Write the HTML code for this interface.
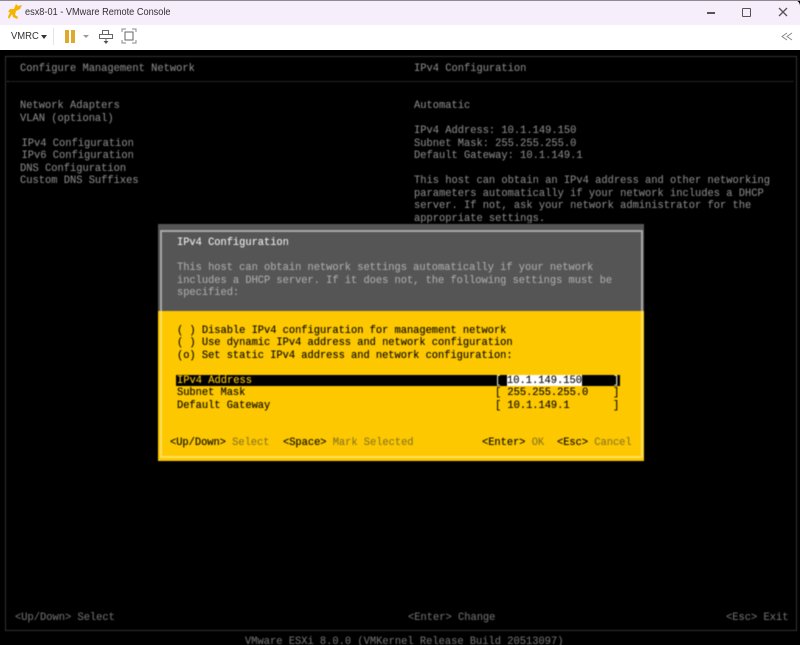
<!DOCTYPE html>
<html><head><meta charset="utf-8">
<style>
html,body{margin:0;padding:0;background:#000}
#p{position:relative;width:800px;height:645px;overflow:hidden;background:#000;font-family:"Liberation Sans",sans-serif}
#tb{position:absolute;left:0;top:0;width:800px;height:25px;background:#f6eefa;border-top-right-radius:6px}
#tl{position:absolute;left:25px;top:5px;font-size:10.5px;line-height:15px;color:#333;white-space:nowrap;transform:scaleX(.875);transform-origin:0 0}
#bar{position:absolute;left:0;top:25px;width:800px;height:25px;background:#fff}
.a{position:absolute}
#scr{position:absolute;left:0;top:50px;width:800px;height:595px;filter:blur(.4px)}
.t{position:absolute;font-family:"Liberation Mono",monospace;font-size:10.42px;line-height:12px;white-space:pre;color:#868686;font-weight:400;transform:scaleY(1.1);-webkit-text-stroke:.1px currentColor}
.k{color:#000;letter-spacing:-.03px}.d{color:#8a7420}.q{letter-spacing:-.03px}
</style></head><body><div id="p">
<div id="tb"></div>
<div class="a" style="left:0;top:0;width:800px;height:1px;background:#8e8a92"></div>
<svg class="a" style="left:7px;top:3px" width="16" height="18" viewBox="0 0 16 18"><path d="M9 1l2 2 4-1-2 4-4 2-1 4 3 2-1 2-4-2-1-3-3 5-1-2 2-5-2 0 2-3 4 0z" fill="#f4b400"/></svg>
<div id="tl">esx8-01 - VMware Remote Console</div>
<div class="a" style="left:707px;top:12px;width:8px;height:1.500px;background:#555"></div>
<div class="a" style="left:742px;top:8px;width:7px;height:7px;border:1.500px solid #555;border-radius:1px"></div>
<svg class="a" style="left:778px;top:7px" width="10" height="10" viewBox="0 0 10 10"><path d="M1 1L9 9M9 1L1 9" stroke="#555" stroke-width="1.300"/></svg>
<div id="bar"></div>
<div class="a" style="left:11px;top:29px;font-size:10.5px;line-height:14px;color:#333;transform:scaleX(.9);transform-origin:0 0">VMRC</div>
<div class="a" style="left:41px;top:35px;width:0;height:0;border-left:3.5px solid transparent;border-right:3.5px solid transparent;border-top:4px solid #333"></div>
<div class="a" style="left:53px;top:28px;width:1px;height:17px;background:#e4e4e4"></div>
<div class="a" style="left:64.500px;top:30px;width:4px;height:13px;background:#e0a82e"></div>
<div class="a" style="left:70.500px;top:30px;width:4px;height:13px;background:#e0a82e"></div>
<div class="a" style="left:83px;top:35px;width:0;height:0;border-left:3.5px solid transparent;border-right:3.5px solid transparent;border-top:3.5px solid #999"></div>
<svg class="a" style="left:98px;top:29px" width="16" height="16" viewBox="0 0 16 16" fill="none" stroke="#666"><path d="M4.5 1.5h6v4h-6zM1.5 5.5h13v4h-13zM8 9.5v3"/><path d="M5.5 12h5L8 15z" fill="#555" stroke="none"/></svg>
<svg class="a" style="left:121px;top:28px" width="16" height="16" viewBox="0 0 16 16" fill="none" stroke="#888"><path d="M1 4V1h4M11 1h4v3M15 12v3h-4M5 15H1v-3"/><rect x="4" y="4" width="8" height="8" stroke="#666"/></svg>
<svg class="a" style="left:781px;top:32px" width="12" height="9" viewBox="0 0 12 9" fill="none" stroke="#888"><path d="M6 1L1 4.500L6 8M11 1L6 4.500L11 8"/></svg>

<div id="scr">
<div class="a" style="left:5px;top:6px;width:790px;height:573px;border:1px solid #333"></div>
<div class="a" style="left:7px;top:31px;width:786px;border-top:1px dotted #444"></div>

<div class="t" style="left:20px;top:13px">Configure Management Network</div>
<div class="t" style="left:20px;top:50px">Network Adapters</div>
<div class="t" style="left:20px;top:62.500px">VLAN (optional)</div>
<div class="t" style="left:21.500px;top:87.500px">IPv4 Configuration</div>
<div class="t" style="left:21.500px;top:100px">IPv6 Configuration</div>
<div class="t" style="left:20px;top:112.500px">DNS Configuration</div>
<div class="t" style="left:20px;top:125px">Custom DNS Suffixes</div>

<div class="t" style="left:414px;top:13px">IPv4 Configuration</div>
<div class="t" style="left:414px;top:50px">Automatic</div>
<div class="t" style="left:414px;top:75px">IPv4 Address: 10.1.149.150</div>
<div class="t" style="left:414px;top:87.500px">Subnet Mask: 255.255.255.0</div>
<div class="t" style="left:414px;top:100px">Default Gateway: 10.1.149.1</div>
<div class="t" style="left:414px;top:125px">This host can obtain an IPv4 address and other networking</div>
<div class="t" style="left:414px;top:137.500px">parameters automatically if your network includes a DHCP</div>
<div class="t" style="left:414px;top:150px">server. If not, ask your network administrator for the</div>
<div class="t" style="left:414px;top:162.500px">appropriate settings.</div>

<div class="a" style="left:153px;top:173px;width:497px;height:241px;background:#000"></div>
<div class="a" style="left:158px;top:174px;width:486px;height:87px;background:#555"></div>
<div class="a" style="left:158px;top:261px;width:486px;height:150px;background:#fdc800"></div>
<div class="a" style="left:160px;top:180px;width:479px;height:81px;border:solid #a8a8a8;border-width:2px 2px 0 2px"></div>
<div class="a" style="left:160px;top:261px;width:479px;height:145px;border:solid #ffdf60;border-width:0 2px 2px 2px"></div>

<div class="t q" style="left:177px;top:187px;color:#eee">IPv4 Configuration</div>
<div class="t q" style="left:177px;top:212px;color:#aaa">This host can obtain network settings automatically if your network</div>
<div class="t q" style="left:177px;top:224.500px;color:#aaa">includes a DHCP server. If it does not, the following settings must be</div>
<div class="t q" style="left:177px;top:237px;color:#aaa">specified:</div>

<div class="t k" style="left:177px;top:274.500px">( ) Disable IPv4 configuration for management network</div>
<div class="t k" style="left:177px;top:287px">( ) Use dynamic IPv4 address and network configuration</div>
<div class="t k" style="left:177px;top:299.500px">(o) Set static IPv4 address and network configuration:</div>

<div class="a" style="left:176px;top:324.500px;width:444px;height:11.500px;background:#000"></div>
<div class="a" style="left:507px;top:324.500px;width:75px;height:11.500px;background:#fff"></div>
<div class="t" style="left:177px;top:324.500px;color:#fdc800">IPv4 Address</div>
<div class="t" style="left:495px;top:324.500px;color:#f4f0dc">[</div>
<div class="t" style="left:507px;top:324.500px;color:#000">10.1.149.150</div>
<div class="t" style="left:613px;top:324.500px;color:#f4f0dc">]</div>
<div class="t k" style="left:177px;top:337px">Subnet Mask</div>
<div class="t k" style="left:495px;top:337px">[ 255.255.255.0</div>
<div class="t k" style="left:613px;top:337px">]</div>
<div class="t k" style="left:177px;top:349.500px">Default Gateway</div>
<div class="t k" style="left:495px;top:349.500px">[ 10.1.149.1</div>
<div class="t k" style="left:613px;top:349.500px">]</div>

<div class="t k" style="left:170px;top:387px">&lt;Up/Down&gt; <span class="d">Select</span></div>
<div class="t k" style="left:283px;top:387px">&lt;Space&gt; <span class="d">Mark Selected</span></div>
<div class="t k" style="left:482px;top:387px">&lt;Enter&gt; <span class="d">OK</span></div>
<div class="t k" style="left:557px;top:387px">&lt;Esc&gt; <span class="d">Cancel</span></div>

<div class="t" style="left:15px;top:562px;color:#6e6e6e">&lt;Up/Down&gt; Select</div>
<div class="t" style="left:408px;top:562px;color:#6e6e6e">&lt;Enter&gt; Change</div>
<div class="t" style="left:726px;top:562px;color:#6e6e6e">&lt;Esc&gt; Exit</div>
<div class="t" style="left:245px;top:585.500px;color:#6e6e6e">VMware ESXi 8.0.0 (VMKernel Release Build 20513097)</div>
</div>
</div></body></html>
